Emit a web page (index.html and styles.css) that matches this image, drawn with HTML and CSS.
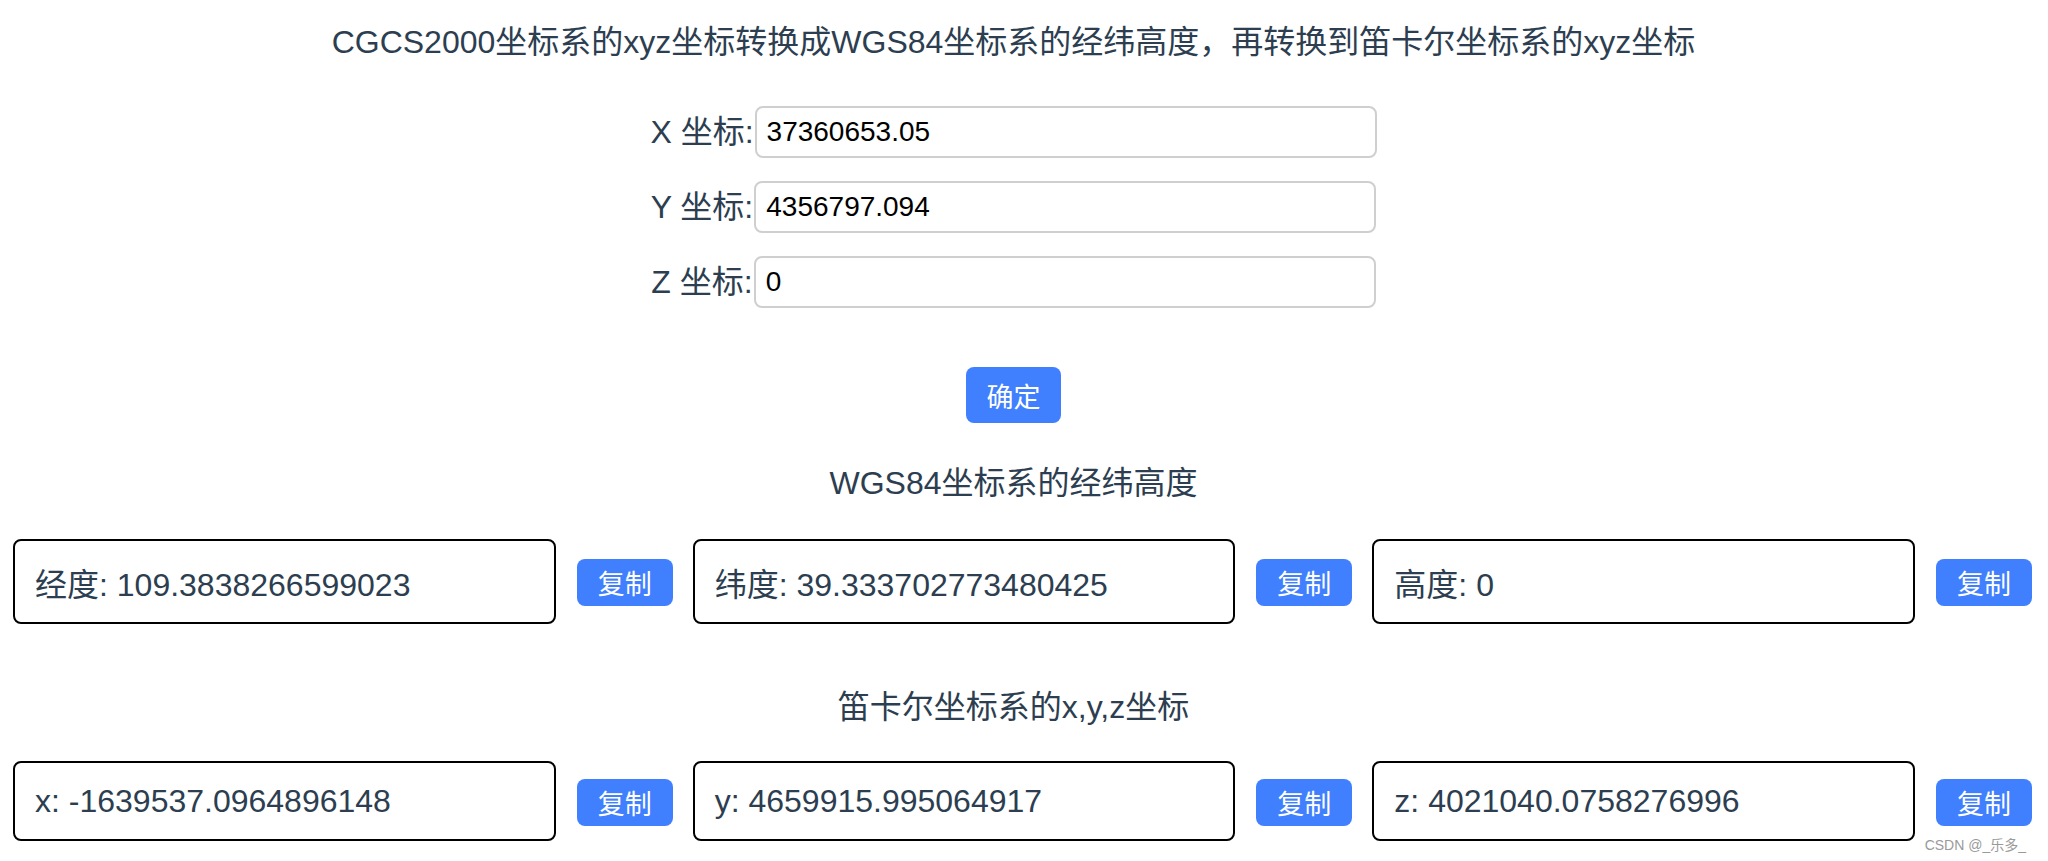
FILE: index.html
```html
<!DOCTYPE html>
<html lang="zh-CN">
<head>
<meta charset="UTF-8">
<title>坐标转换</title>
<link rel="stylesheet" href="styles.css">
</head>
<body>
<div class="app">
  <section class="top">
    <h1 class="title">CGCS2000坐标系的xyz坐标转换成WGS84坐标系的经纬高度，再转换到笛卡尔坐标系的xyz坐标</h1>
    <div class="form">
      <div class="form-row"><label class="form-label">X 坐标:</label><input class="form-input" type="text" value="37360653.05"></div>
      <div class="form-row"><label class="form-label">Y 坐标:</label><input class="form-input" type="text" value="4356797.094"></div>
      <div class="form-row"><label class="form-label">Z 坐标:</label><input class="form-input" type="text" value="0"></div>
    </div>
    <button class="btn btn-confirm">确定</button>
  </section>

  <h2 class="section-title first">WGS84坐标系的经纬高度</h2>
  <div class="result-row">
    <div class="group"><div class="box box-tall">经度: 109.3838266599023</div><button class="btn btn-copy">复制</button></div>
    <div class="group"><div class="box box-tall">纬度: 39.333702773480425</div><button class="btn btn-copy">复制</button></div>
    <div class="group"><div class="box box-tall">高度: 0</div><button class="btn btn-copy">复制</button></div>
  </div>

  <h2 class="section-title second">笛卡尔坐标系的x,y,z坐标</h2>
  <div class="result-row">
    <div class="group"><div class="box box-short">x: -1639537.0964896148</div><button class="btn btn-copy">复制</button></div>
    <div class="group"><div class="box box-short">y: 4659915.995064917</div><button class="btn btn-copy">复制</button></div>
    <div class="group"><div class="box box-short">z: 4021040.0758276996</div><button class="btn btn-copy">复制</button></div>
  </div>
</div>
<div class="watermark">CSDN @_乐多_</div>
</body>
</html>
```

FILE: styles.css
```css
html, body {
  margin: 0;
  padding: 0;
  background: #ffffff;
}

body {
  font-family: "Liberation Sans", "Noto Sans CJK SC", sans-serif;
  color: #2c3e50;
  width: 2048px;
  height: 861px;
  overflow: hidden;
  position: relative;
}

.app {
  padding: 21px 16px 0 13px;
}

.top {
  display: flex;
  flex-direction: column;
  align-items: center;
  padding-right: 18px;
}

.title {
  margin: 0;
  font-size: 32px;
  line-height: 42px;
  font-weight: normal;
  text-align: center;
}

.form {
  margin-top: 43px;
  display: flex;
  flex-direction: column;
  align-items: center;
  gap: 23px;
}

.form-row {
  display: flex;
  align-items: center;
}

.form-label {
  font-size: 32px;
  line-height: 40px;
  margin-right: 1px;
}

.form-input {
  box-sizing: border-box;
  width: 622px;
  height: 52px;
  border: 2px solid #cfcfcf;
  border-radius: 8px;
  padding: 0 10px;
  font-family: "Liberation Sans", "Noto Sans CJK SC", sans-serif;
  font-size: 28px;
  color: #000000;
  background: #ffffff;
  outline: none;
}

.btn {
  border: none;
  background: #4080ff;
  color: #ffffff;
  font-family: "Liberation Sans", "Noto Sans CJK SC", sans-serif;
  border-radius: 8px;
  padding: 0;
  cursor: pointer;
}

.btn-confirm {
  margin-top: 59px;
  width: 95px;
  height: 56px;
  font-size: 27px;
}

.section-title {
  margin: 0;
  font-size: 32px;
  line-height: 42px;
  font-weight: normal;
  text-align: center;
  padding-right: 18px;
}

.section-title.first {
  margin-top: 39px;
}

.section-title.second {
  margin-top: 62px;
}

.result-row {
  display: flex;
  gap: 20px;
  margin-top: 35px;
}

.section-title.second + .result-row {
  margin-top: 33px;
}

.group {
  flex: 1;
  display: flex;
  align-items: center;
  gap: 21px;
}

.box {
  flex: 1;
  box-sizing: border-box;
  border: 2px solid #000000;
  border-radius: 8px;
  padding: 0 20px;
  font-size: 32px;
  display: flex;
  align-items: center;
  white-space: nowrap;
}

.box-tall {
  height: 85px;
}

.box-short {
  height: 80px;
}

.btn-copy {
  width: 96px;
  height: 47px;
  font-size: 27px;
  flex: none;
  margin-top: 2px;
}

.watermark {
  position: absolute;
  right: 22px;
  bottom: 7px;
  font-size: 14px;
  color: #9a9a9a;
}
```
